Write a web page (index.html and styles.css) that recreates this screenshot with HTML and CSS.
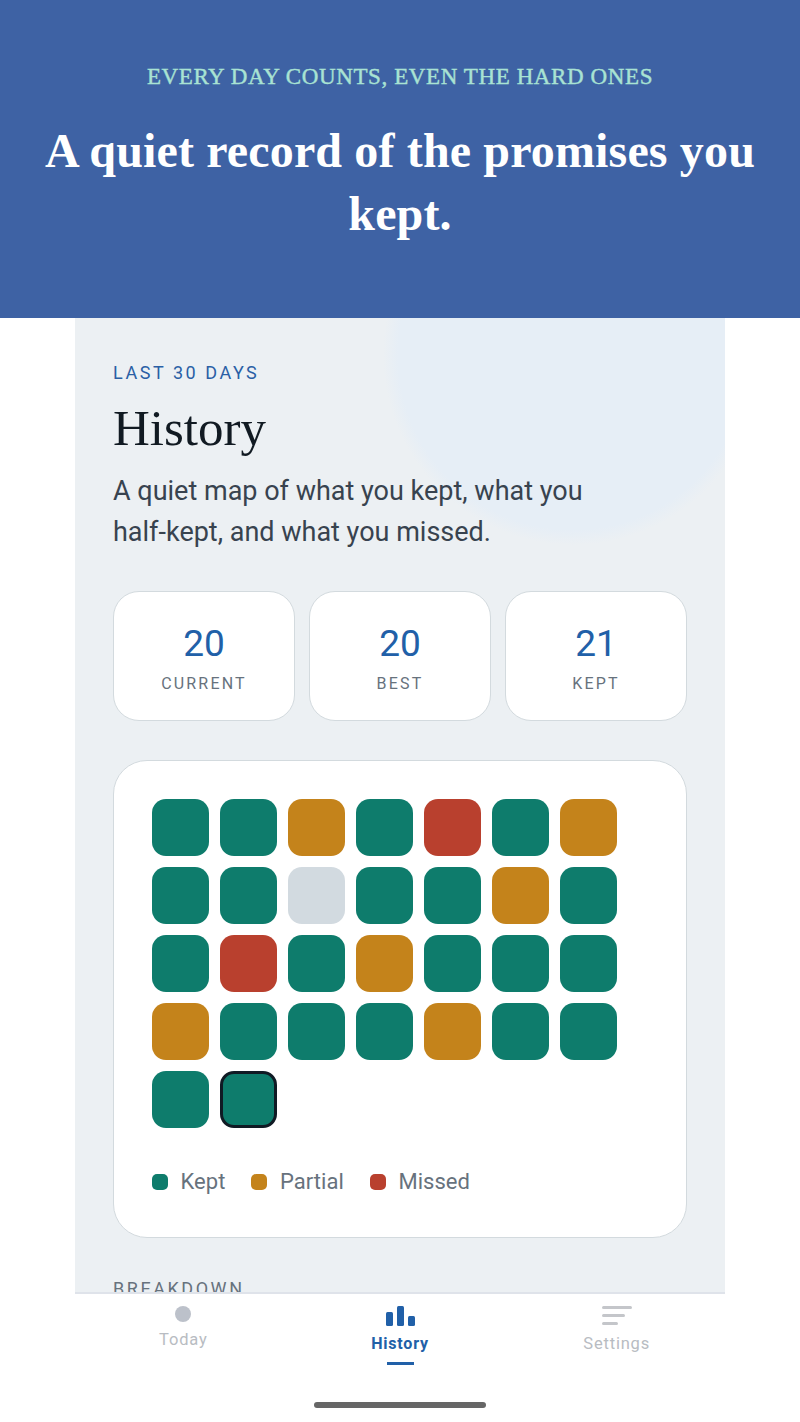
FILE: index.html
```html
<!DOCTYPE html>
<html lang="en">
<head>
  <meta charset="UTF-8">
  <meta name="viewport" content="width=device-width, initial-scale=1.0">
  <title>History</title>
  <link rel="stylesheet" href="styles.css">
</head>
<body>
  <header class="banner">
    <p class="banner-kicker">EVERY DAY COUNTS, EVEN THE HARD ONES</p>
    <h1 class="banner-title">A quiet record of the promises you kept.</h1>
  </header>

  <div class="screen">
    <main class="content">
      <div class="glow"></div>
      <p class="eyebrow">LAST 30 DAYS</p>
      <h2 class="title">History</h2>
      <p class="intro">A quiet map of what you kept, what you half-kept, and what you missed.</p>

      <section class="stats">
        <div class="stat"><span class="stat-value">20</span><span class="stat-label">CURRENT</span></div>
        <div class="stat"><span class="stat-value">20</span><span class="stat-label">BEST</span></div>
        <div class="stat"><span class="stat-value">21</span><span class="stat-label">KEPT</span></div>
      </section>

      <section class="map-card">
        <div class="grid">
          <div class="cell kept"></div>
          <div class="cell kept"></div>
          <div class="cell partial"></div>
          <div class="cell kept"></div>
          <div class="cell missed"></div>
          <div class="cell kept"></div>
          <div class="cell partial"></div>

          <div class="cell kept"></div>
          <div class="cell kept"></div>
          <div class="cell empty"></div>
          <div class="cell kept"></div>
          <div class="cell kept"></div>
          <div class="cell partial"></div>
          <div class="cell kept"></div>

          <div class="cell kept"></div>
          <div class="cell missed"></div>
          <div class="cell kept"></div>
          <div class="cell partial"></div>
          <div class="cell kept"></div>
          <div class="cell kept"></div>
          <div class="cell kept"></div>

          <div class="cell partial"></div>
          <div class="cell kept"></div>
          <div class="cell kept"></div>
          <div class="cell kept"></div>
          <div class="cell partial"></div>
          <div class="cell kept"></div>
          <div class="cell kept"></div>

          <div class="cell kept"></div>
          <div class="cell kept today"></div>
        </div>

        <div class="legend">
          <span class="legend-item"><i class="swatch kept"></i>Kept</span>
          <span class="legend-item"><i class="swatch partial"></i>Partial</span>
          <span class="legend-item"><i class="swatch missed"></i>Missed</span>
        </div>
      </section>

      <p class="section-label">BREAKDOWN</p>
    </main>

    <nav class="tabs">
      <a class="tab tab-today">
        <span class="tab-dot"></span>
        <span class="tab-text">Today</span>
      </a>
      <a class="tab active">
        <svg class="tab-icon" width="29" height="20" viewBox="0 0 29 20">
          <rect x="0" y="6" width="7" height="14" rx="1.5"/>
          <rect x="11" y="0" width="7" height="20" rx="1.5"/>
          <rect x="22" y="10" width="7" height="10" rx="1.5"/>
        </svg>
        <span class="tab-text">History</span>
        <span class="tab-line"></span>
      </a>
      <a class="tab">
        <span class="tab-lines"><b class="l1"></b><b class="l2"></b><b class="l3"></b></span>
        <span class="tab-text">Settings</span>
      </a>
    </nav>
  </div>

  <div class="home-bar"><span class="home-pill"></span></div>
</body>
</html>
```

FILE: styles.css
```css
* {
  box-sizing: border-box;
}

html, body {
  margin: 0;
  height: 100%;
}

body {
  display: flex;
  flex-direction: column;
  overflow: hidden;
  background-color: #fff;
  font-family: Roboto, "Liberation Sans", sans-serif;
}

.banner {
  height: 318px;
  flex-shrink: 0;
  padding: 64px 30px 0;
  background-color: #3e62a4;
  text-align: center;
  font-family: "Liberation Serif", serif;
}

.banner-kicker {
  margin: 0 0 29px;
  font-size: 23px;
  line-height: 26px;
  letter-spacing: 0.6px;
  font-weight: 400;
  -webkit-text-stroke: 0.4px #a9e3d3;
  color: #a9e3d3;
}

.banner-title {
  margin: 0;
  font-size: 48px;
  line-height: 63px;
  letter-spacing: 0.15px;
  font-weight: 700;
  color: #fff;
}

.screen {
  flex: 1;
  min-height: 0;
  width: 650px;
  margin: 0 auto;
  display: flex;
  flex-direction: column;
}

.content {
  flex: 1;
  min-height: 0;
  position: relative;
  overflow: hidden;
  padding: 44px 38px 0;
  background-color: #ecf0f3;
}

/* pale circle behind the heading */
.glow {
  position: absolute;
  top: -153px;
  right: -38px;
  width: 380px;
  height: 380px;
  border-radius: 50%;
  background: radial-gradient(circle closest-side, #e6eef6 92%, #ecf0f3 100%);
}

.eyebrow, .title, .intro, .stats, .map-card, .section-label {
  position: relative;
}

.eyebrow {
  margin: 0;
  font-size: 18px;
  line-height: 22px;
  letter-spacing: 2.55px;
  color: #2a5fa5;
}

.title {
  margin: 14px 0 0;
  font-family: "Liberation Serif", serif;
  font-size: 51px;
  line-height: 60px;
  font-weight: 400;
  color: #111a22;
}

.intro {
  margin: 13px 0 0;
  width: 500px;
  font-size: 27px;
  line-height: 41px;
  color: #38434f;
}

.stats {
  display: flex;
  gap: 14px;
  margin-top: 38px;
}

.stat {
  flex: 1;
  height: 130px;
  display: flex;
  flex-direction: column;
  align-items: center;
  padding-top: 30px;
  background-color: #fff;
  border: 1px solid #d3dade;
  border-radius: 26px;
}

.stat-value {
  font-size: 37px;
  line-height: 44px;
  color: #2160a8;
}

.stat-label {
  margin-top: 8px;
  font-size: 16px;
  line-height: 20px;
  letter-spacing: 2.2px;
  color: #67727d;
}

.map-card {
  height: 478px;
  margin-top: 39px;
  padding: 38px;
  background-color: #fff;
  border: 1px solid #d3dade;
  border-radius: 34px;
}

.grid {
  display: grid;
  grid-template-columns: repeat(7, 57px);
  grid-auto-rows: 57px;
  gap: 11px;
}

.cell {
  border-radius: 14px;
}

.kept {
  background-color: #0e7c6c;
}

.partial {
  background-color: #c4831b;
}

.missed {
  background-color: #b9402e;
}

.empty {
  background-color: #d2dae0;
}

.today {
  border: 3px solid #101a24;
}

.legend {
  display: flex;
  gap: 26px;
  margin-top: 40px;
}

.legend-item {
  display: flex;
  align-items: center;
  gap: 12.5px;
  font-size: 22px;
  line-height: 28px;
  letter-spacing: 0.05px;
  color: #67727d;
}

.swatch {
  width: 16px;
  height: 16px;
  border-radius: 5px;
}

.section-label {
  margin: 40px 0 0;
  font-size: 18px;
  line-height: 22px;
  letter-spacing: 2.55px;
  color: #67727d;
}

.tabs {
  flex-shrink: 0;
  height: 90px;
  display: flex;
  border-top: 2px solid #dfe3ea;
  background-color: #fff;
}

.tab {
  flex: 1;
  display: flex;
  flex-direction: column;
  align-items: center;
  padding-top: 12px;
}

.tab-text {
  margin-top: 7px;
  font-size: 16.5px;
  line-height: 22px;
  letter-spacing: 0.8px;
  color: #b8bcc2;
}

.tab-dot {
  width: 16px;
  height: 16px;
  border-radius: 50%;
  background-color: #bcc1ca;
}

.tab-icon {
  fill: #2160a8;
}

.active .tab-text {
  font-size: 16px;
  font-weight: 700;
  color: #2160a8;
}

.tab-line {
  width: 27px;
  height: 3px;
  margin-top: 7px;
  background-color: #2160a8;
}

.tab-lines {
  width: 30px;
  height: 20px;
  display: flex;
  flex-direction: column;
  gap: 5px;
}

.tab-lines b {
  height: 3px;
  border-radius: 2px;
  background-color: #c4c6ca;
}

.l1 {
  width: 30px;
}

.l2 {
  width: 23px;
}

.l3 {
  width: 16px;
}

.home-bar {
  height: 40px;
  flex-shrink: 0;
  display: flex;
  justify-content: center;
  padding-top: 20px;
}

.home-pill {
  width: 172px;
  height: 6px;
  border-radius: 3px;
  background-color: #666;
}
```
